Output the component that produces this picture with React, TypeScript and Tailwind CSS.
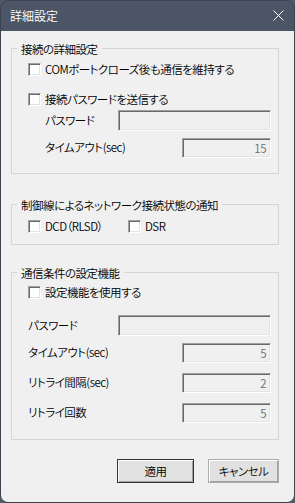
import React from 'react';

const font = { fontFamily: '"Noto Sans CJK JP", "Noto Sans", sans-serif' };

const Box: React.FC = () => (
  <span className="inline-block w-[13px] h-[13px] shrink-0 bg-white border border-t-[#a0a0a0] border-l-[#a0a0a0] border-r-white border-b-white shadow-[inset_1px_1px_0_#696969,inset_-1px_-1px_0_#e3e3e3]" />
);

const Check: React.FC<{ label: string; className?: string }> = ({ label, className }) => (
  <div className={`flex items-center h-[14px] gap-[4px] ${className ?? ''}`}>
    <Box />
    <span className="leading-[14px] whitespace-nowrap">{label}</span>
  </div>
);

const Field: React.FC<{ w: string; value?: string }> = ({ w, value }) => (
  <div
    className={`${w} h-full ml-auto bg-[#f0f0f0] border border-t-[#a0a0a0] border-l-[#a0a0a0] border-r-white border-b-white shadow-[inset_1px_1px_0_#696969,inset_-1px_-1px_0_#e3e3e3] flex items-center justify-end pr-[4px] text-[#6d6d6d] leading-[14px]`}
  >
    {value}
  </div>
);

const Group: React.FC<{ title: string; className?: string; children: React.ReactNode }> = ({
  title,
  className,
  children,
}) => (
  <div className={`border border-[#d5d5d5] pl-[16px] pr-[7px] ${className ?? ''}`}>
    <div className="-mt-[7px] -ml-[11px] px-[4px] w-fit bg-[#f0f0f0] leading-[14px] whitespace-nowrap">
      {title}
    </div>
    {children}
  </div>
);

export default function App() {
  return (
    <div className="w-[295px] h-[503px] bg-[#515b6a]">
      <div
        className="w-full h-full flex flex-col rounded-[8px] overflow-hidden border border-[#3c4450] text-[11.5px] font-[350] tracking-[-0.5px] text-black [font-feature-settings:'palt']"
        style={font}
      >
        <div className="h-[30px] shrink-0 bg-[#4b5565] flex items-center justify-between pl-[9px] pr-[10px]">
          <span className="text-white text-[12px] tracking-normal leading-[14px]">詳細設定</span>
          <svg width="11" height="11" viewBox="0 0 11 11" className="mb-[2px]">
            <path d="M0.5 0.5 L10.5 10.5 M10.5 0.5 L0.5 10.5" stroke="white" strokeWidth="1" />
          </svg>
        </div>

        <div className="flex-1 bg-[#f0f0f0] pl-[10px] pr-[15px] flex flex-col">
          <Group title="接続の詳細設定" className="mt-[17px] pb-[15px]">
            <Check label="COMポートクローズ後も通信を維持する" className="mt-[6px]" />
            <Check label="接続パスワードを送信する" className="mt-[16px]" />
            <div className="flex items-center h-[21px] mt-[4px] pl-[17px]">
              <span>パスワード</span>
              <Field w="w-[153px]" />
            </div>
            <div className="flex items-center h-[20px] mt-[7px] pl-[17px]">
              <span>タイムアウト(sec)</span>
              <Field w="w-[89px]" value="15" />
            </div>
          </Group>

          <Group title="制御線によるネットワーク接続状態の通知" className="mt-[30px] pb-[11px]">
            <div className="flex mt-[7px]">
              <Check label="DCD（RLSD）" className="w-[100px]" />
              <Check label="DSR" />
            </div>
          </Group>

          <Group title="通信条件の設定機能" className="mt-[27px] pb-[16px]">
            <Check label="設定機能を使用する" className="mt-[5px]" />
            <div className="flex items-center h-[21px] mt-[16px]">
              <span>パスワード</span>
              <Field w="w-[153px]" />
            </div>
            <div className="flex items-center h-[20px] mt-[7px]">
              <span>タイムアウト(sec)</span>
              <Field w="w-[89px]" value="5" />
            </div>
            <div className="flex items-center h-[20px] mt-[10px]">
              <span>リトライ間隔(sec)</span>
              <Field w="w-[89px]" value="2" />
            </div>
            <div className="flex items-center h-[20px] mt-[10px]">
              <span>リトライ回数</span>
              <Field w="w-[89px]" value="5" />
            </div>
          </Group>

          <div className="flex justify-end gap-[14px] mt-[19px]">
            <button className="w-[77px] h-[24px] bg-[#e1e1e1] border border-[#333] shadow-[inset_1px_1px_0_#ffffff,inset_-1px_-1px_0_#a0a0a0] leading-[14px]">
              適用
            </button>
            <button className="w-[71px] h-[24px] bg-[#e1e1e1] border border-[#adadad] shadow-[inset_1px_1px_0_#ffffff,inset_-1px_-1px_0_#a0a0a0] leading-[14px]">
              キャンセル
            </button>
          </div>
        </div>
      </div>
    </div>
  );
}
